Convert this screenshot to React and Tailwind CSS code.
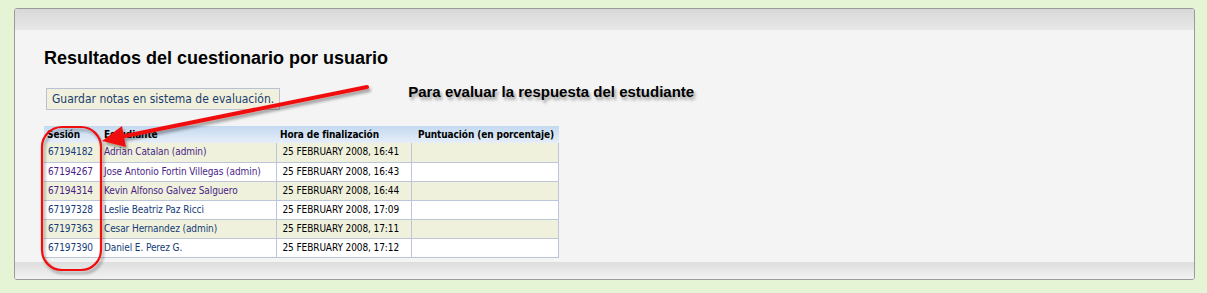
import React from 'react';

const rows = [
    { id: "67194182", name: "Adrian Catalan (admin)", time: "25 FEBRUARY 2008, 16:41", idVisited: false, nameVisited: true },
    { id: "67194267", name: "Jose Antonio Fortin Villegas (admin)", time: "25 FEBRUARY 2008, 16:43", idVisited: true, nameVisited: true },
    { id: "67194314", name: "Kevin Alfonso Galvez Salguero", time: "25 FEBRUARY 2008, 16:44", idVisited: true, nameVisited: true },
    { id: "67197328", name: "Leslie Beatriz Paz Ricci", time: "25 FEBRUARY 2008, 17:09", idVisited: false, nameVisited: false },
    { id: "67197363", name: "Cesar Hernandez (admin)", time: "25 FEBRUARY 2008, 17:11", idVisited: false, nameVisited: false },
    { id: "67197390", name: "Daniel E. Perez G.", time: "25 FEBRUARY 2008, 17:12", idVisited: false, nameVisited: false },
];

// red marker drawn over the screenshot
const Annotation = () => (
    <svg className="absolute left-0 top-0 pointer-events-none" width="1207" height="293" viewBox="0 0 1207 293">
        <defs>
            <filter id="shadow" x="-20%" y="-20%" width="140%" height="140%">
                <feDropShadow dx="2" dy="3" stdDeviation="1.5" floodColor="#000" floodOpacity="0.35" />
            </filter>
        </defs>
        <g filter="url(#shadow)">
            <rect x="42" y="127" width="59" height="143" rx="20" ry="20" fill="none" stroke="#f01010" strokeWidth="2.2" />
            <line x1="367" y1="87" x2="120" y2="137" stroke="#f01010" strokeWidth="4" strokeLinecap="round" />
            <polygon points="102,141 122,126 126,147" fill="#f01010" />
        </g>
    </svg>
);

export default function App() {
    return (
        <div className="relative w-[1207px] h-[293px] bg-[#e6f4d6] pt-[8px] pl-[14px]">
            <div className="w-[1181px] h-[272px] border border-[#9a9a9a] rounded-[3px] bg-[#f4f4f4] flex flex-col overflow-hidden">
                <div className="shrink-0 h-[21px] bg-gradient-to-b from-[#d8d8d8] to-[#e8e8e8]"></div>

                <div className="flex-1 min-h-0 pl-[29px] pt-[17px]">
                    <h2 className="text-[18px] leading-[22px] font-bold text-black font-['Liberation_Sans',Arial,sans-serif]">
                        Resultados del cuestionario por usuario
                    </h2>

                    <div className="flex items-start mt-[15px]">
                        <button className="ml-[2px] mt-[4px] h-[22px] px-[5px] bg-[#f0f0dc] border border-[#b9c2d4] text-[#1a3c6e] text-[12px] leading-[20px] whitespace-nowrap font-['DejaVu_Sans_Condensed','DejaVu_Sans',sans-serif]">
                            Guardar notas en sistema de evaluación.
                        </button>
                        <span className="ml-[128px] mt-[-1px] text-[15px] leading-[18px] font-bold text-black whitespace-nowrap font-['Liberation_Sans',Arial,sans-serif] [text-shadow:2px_3px_3px_rgba(0,0,0,0.35)]">
                            Para evaluar la respuesta del estudiante
                        </span>
                    </div>

                    <table className="mt-[16px] w-[515px] table-fixed border-collapse whitespace-nowrap text-[10px] tracking-[-0.1px] font-['DejaVu_Sans_Condensed','DejaVu_Sans',sans-serif]">
                        <colgroup>
                            <col className="w-[56px]" />
                            <col className="w-[176px]" />
                            <col className="w-[135px]" />
                            <col />
                        </colgroup>
                        <thead>
                            <tr className="h-[17px] bg-gradient-to-b from-[#c4d9f0] to-[#e6eef8] text-black">
                                <th className="text-left font-bold pl-[3px] leading-[16px]">Sesión</th>
                                <th className="text-left font-bold pl-[4px] leading-[16px]">Estudiante</th>
                                <th className="text-left font-bold pl-[4px] leading-[16px]">Hora de finalización</th>
                                <th className="text-left font-bold pl-[7px] leading-[16px]">Puntuación (en porcentaje)</th>
                            </tr>
                        </thead>
                        <tbody>
                            {rows.map((r, i) => (
                                <tr key={r.id} className={`h-[19px] ${i % 2 === 0 ? "bg-[#eff1dc]" : "bg-white"} border-b border-[#bcc6d8]`}>
                                    <td className={`pl-[4px] leading-[18px] ${r.idVisited ? "text-[#4b1e87]" : "text-[#153b78]"}`}>{r.id}</td>
                                    <td className={`pl-[4px] leading-[18px] border-r border-[#bcc6d8] ${r.nameVisited ? "text-[#4b1e87]" : "text-[#153b78]"}`}>{r.name}</td>
                                    <td className="pl-[6px] leading-[18px] text-black border-r border-[#bcc6d8]">{r.time}</td>
                                    <td className="border-r border-[#bcc6d8]"></td>
                                </tr>
                            ))}
                        </tbody>
                    </table>
                </div>

                <div className="shrink-0 h-[17px] bg-gradient-to-b from-[#dedede] to-[#f2f2f2]"></div>
            </div>
            <Annotation />
        </div>
    );
}
